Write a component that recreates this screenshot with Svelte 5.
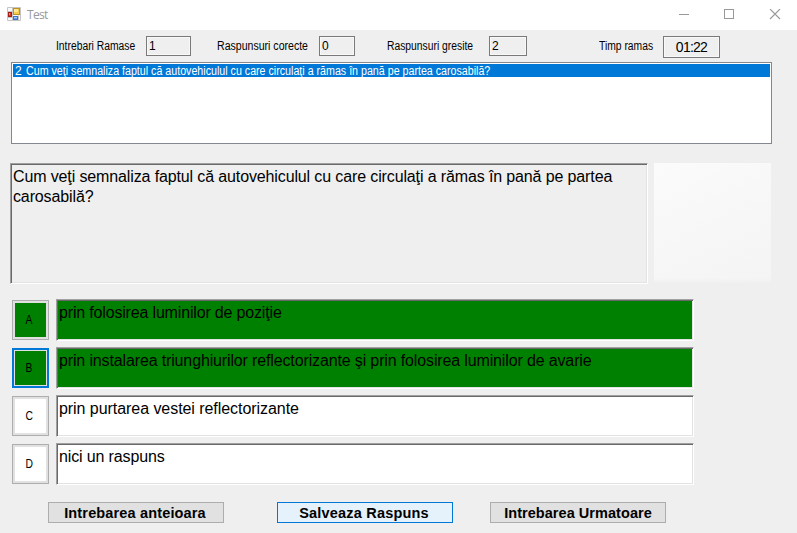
<script>
  const stats = [
    { label: 'Intrebari Ramase', value: '1', cls: 'left' },
    { label: 'Raspunsuri corecte', value: '0', cls: 'right' },
    { label: 'Raspunsuri gresite', value: '2', cls: 'wrong' }
  ];
  const question = 'Cum veţi semnaliza faptul că autovehiculul cu care circulaţi a rămas în pană pe partea carosabilă?';
  const answers = [
    { key: 'A', text: 'prin folosirea luminilor de poziţie', selected: true },
    { key: 'B', text: 'prin instalarea triunghiurilor reflectorizante şi prin folosirea luminilor de avarie', selected: true, focused: true },
    { key: 'C', text: 'prin purtarea vestei reflectorizante' },
    { key: 'D', text: 'nici un raspuns' }
  ];
</script>

<div class="window">
  <header>
    <svg class="app" width="15" height="15" viewBox="0 0 15 15">
      <path d="M.5 .5h13v13H.5zM5.500 .5v13M.5 4.500h5M.5 10.500h5M11.500 8.500v5" fill="#f8f8f8" stroke="#c4c4c4" />
      <rect x="6.500" y="1.500" width="6" height="6" fill="#f7cb4d" stroke="#bf921f" />
      <rect x="7" y="2" width="4" height="3" fill="#ffe891" />
      <rect x="1.500" y="5.500" width="3" height="4" fill="#d43a27" stroke="#a01e14" />
      <rect x="2" y="6" width="1" height="2" fill="#f08a70" />
      <rect x="6.500" y="9.500" width="4" height="3" fill="#6da0f0" stroke="#3d72cd" />
      <rect x="7" y="10" width="3" height="1" fill="#a9c9fa" />
    </svg>
    <span class="title">Test</span>
    <svg class="controls" width="106" height="12" viewBox="0 0 106 12" fill="none" stroke="#999">
      <path d="M0 5.500h10M45.500 .5h9v9h-9z" shape-rendering="crispEdges" />
      <path d="M91 0l10 10M101 0l-10 10" stroke-width="1.1" />
    </svg>
  </header>

  <div class="stats">
    {#each stats as s}
      <div class="label {s.cls}"><span>{s.label}</span></div>
      <div class="value {s.cls}">{s.value}</div>
    {/each}
    <div class="label time"><span>Timp ramas</span></div>
    <div class="value time">01:22</div>
  </div>

  <div class="list"><div class="item"><b>2</b><span>{question}</span></div></div>

  <div class="main">
    <div class="question sunken">{question}</div>
    <div class="picture"></div>
  </div>

  <div class="answers">
    {#each answers as a}
      <div class="answer" class:selected={a.selected}>
        <button class="key" class:focused={a.focused}><span><i>{a.key}</i></span></button>
        <div class="text sunken {a.key}">{a.text}</div>
      </div>
    {/each}
  </div>

  <footer>
    <button class="prev">Intrebarea anteioara</button>
    <button class="primary">Salveaza Raspuns</button>
    <button>Intrebarea Urmatoare</button>
  </footer>
</div>

<style>
  .window, .window * { box-sizing: border-box; }
  .window {
    width: 797px; height: 533px; background: #efefef; overflow: hidden;
    font-family: "Liberation Sans", Arial, sans-serif; color: #000;
    display: flex; flex-direction: column;
  }
  button { font-family: inherit; color: #000; border-radius: 0; padding: 0; margin: 0; }
  header { height: 30px; background: #fff; display: flex; align-items: flex-start; padding-right: 12px; flex: none; }
  .app { margin: 7px 0 0 7px; }
  .title { margin: 7px auto 0 5px; font: 12px/16px "Open Sans", sans-serif; letter-spacing: -0.7px; color: #999; }
  .controls { margin-top: 9px; }

  .stats { height: 32px; padding-top: 6px; display: flex; align-items: flex-start; flex: none; }
  .label { font-size: 12px; line-height: 20px; white-space: nowrap; }
  .label span { display: inline-block; transform: scaleX(0.86); transform-origin: left; }
  .label.left { margin-left: 56px; width: 90px; }
  .label.right { margin-left: 26px; width: 102px; }
  .label.right span { transform: scaleX(0.88); }
  .label.wrong { margin-left: 32px; width: 102px; }
  .label.time { margin-left: 72px; width: 64px; }
  .value { height: 20px; border: 1px solid #7a7a7a; box-shadow: inset 0 0 0 1px #f8f8f8; font-size: 12px; line-height: 18px; padding-left: 2px; }
  .value.left { width: 45px; }
  .value.right { width: 36px; }
  .value.wrong { width: 38px; }
  .value.time { width: 57px; height: 22px; padding: 0; text-align: center; font-size: 14px; line-height: 21px; letter-spacing: -0.75px; }

  .list { margin-left: 11px; width: 761px; height: 82px; background: #fff; border: 1px solid #828790; padding: 1px; flex: none; }
  .item { height: 13px; background: #0078d7; color: #fff; font-size: 12px; line-height: 14px; padding-left: 2px; display: flex; white-space: nowrap; }
  .item b { font-weight: 400; width: 11px; }
  .item span { transform: scaleX(0.889); transform-origin: left; }

  .sunken {
    border: 1px solid; border-color: #a0a0a0 #fff #fff #a0a0a0;
    box-shadow: inset 1px 1px #696969, inset -1px -1px #e3e3e3;
    font-size: 16px; line-height: 20px; letter-spacing: -0.14px;
  }
  .main { display: flex; margin: 19px 0 0 10px; gap: 6px; flex: none; }
  .question { width: 638px; height: 121px; padding: 3px 24px 0 2px; letter-spacing: -0.127px; }
  .picture {
    width: 117px; height: 120px;
    background: linear-gradient(to bottom, transparent 96%, #f0f0f0 100%), linear-gradient(155deg, #fbfbfb, #f7f7f7 55%, #f4f4f4);
  }

  .answers { margin: 15px 0 0 12px; display: flex; flex-direction: column; gap: 6px; flex: none; }
  .answer { display: flex; gap: 7px; }
  .key { width: 37px; height: 40px; margin-top: 1px; border: 1px solid #adadad; background: #e1e1e1; padding: 2px; display: flex; }
  .key span { flex: 1; height: 34px; background: #fff; font-size: 12px; line-height: 34px; text-align: center; padding-right: 2px; }
  .key i { font-style: normal; display: inline-block; transform: scaleX(0.86); }
  .key.focused { border: 2px solid #0078d7; padding: 1px; }
  .text { width: 638px; height: 42px; background: #fff; padding: 3px 0 0 2px; white-space: nowrap; }
  .text.A { letter-spacing: -0.17px; }
  .text.C { letter-spacing: -0.055px; }
  .selected .text, .selected .key span { background: #008000; }

  footer { display: flex; margin: 17px 0 0 48px; flex: none; }
  footer button { width: 176px; height: 21px; border: 1px solid #adadad; background: #e1e1e1; font-size: 14.5px; line-height: 19px; padding-top: 1px; font-weight: 700; letter-spacing: 0.05px; white-space: nowrap; }
  footer .prev { letter-spacing: 0.15px; padding-right: 2px; }
  footer .primary { margin: 0 37px 0 53px; border-color: #0078d7; background: #e5f1fb; letter-spacing: 0.2px; padding-right: 2px; }
</style>
